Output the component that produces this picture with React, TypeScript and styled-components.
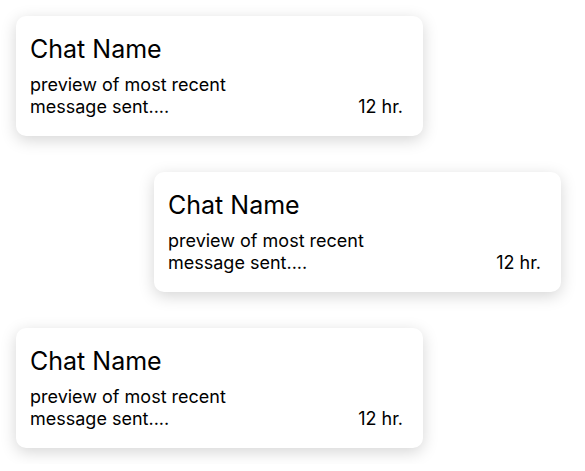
import styled, { createGlobalStyle } from "styled-components";

const GlobalStyle = createGlobalStyle`
  html, body {
    margin: 0;
    padding: 0;
    background: #ffffff;
  }
  body {
    font-family: Inter, "Liberation Sans", sans-serif;
    color: #000;
  }
`;

interface CardProps {
  $offset?: number;
}

export const ChatList = styled.div`
  display: flex;
  flex-direction: column;
  align-items: flex-start;
  row-gap: 36px;
  padding: 16px;
`;

export const ChatCard = styled.div<CardProps>`
  box-sizing: border-box;
  width: 407px;
  height: 120px;
  margin-left: ${(props) => props.$offset ?? 0}px;
  padding: 18px 20px 0 14px;
  background: #ffffff;
  border-radius: 10px;
  box-shadow: 0 4px 16px rgba(0, 0, 0, 0.17);
  display: flex;
  flex-direction: column;
  row-gap: 10px;
`;

export const ChatName = styled.div`
  font-size: 25px;
  line-height: 30px;
  font-weight: 400;
`;

export const PreviewRow = styled.div`
  display: flex;
  flex-direction: row;
  justify-content: space-between;
  align-items: flex-end;
`;

export const PreviewText = styled.div`
  font-size: 18px;
  line-height: 21.6px;
  max-width: 230px;
`;

export const TimeText = styled.div`
  font-size: 18px;
  line-height: 21.6px;
`;

const chats = [
  { name: "Chat Name", preview: "preview of most recent message sent....", time: "12 hr.", offset: 0 },
  { name: "Chat Name", preview: "preview of most recent message sent....", time: "12 hr.", offset: 138 },
  { name: "Chat Name", preview: "preview of most recent message sent....", time: "12 hr.", offset: 0 },
];

export default function App() {
  return (
    <>
      <GlobalStyle />
      <ChatList>
        {chats.map((chat, i) => (
          <ChatCard key={i} $offset={chat.offset}>
            <ChatName>{chat.name}</ChatName>
            <PreviewRow>
              <PreviewText>{chat.preview}</PreviewText>
              <TimeText>{chat.time}</TimeText>
            </PreviewRow>
          </ChatCard>
        ))}
      </ChatList>
    </>
  );
}
